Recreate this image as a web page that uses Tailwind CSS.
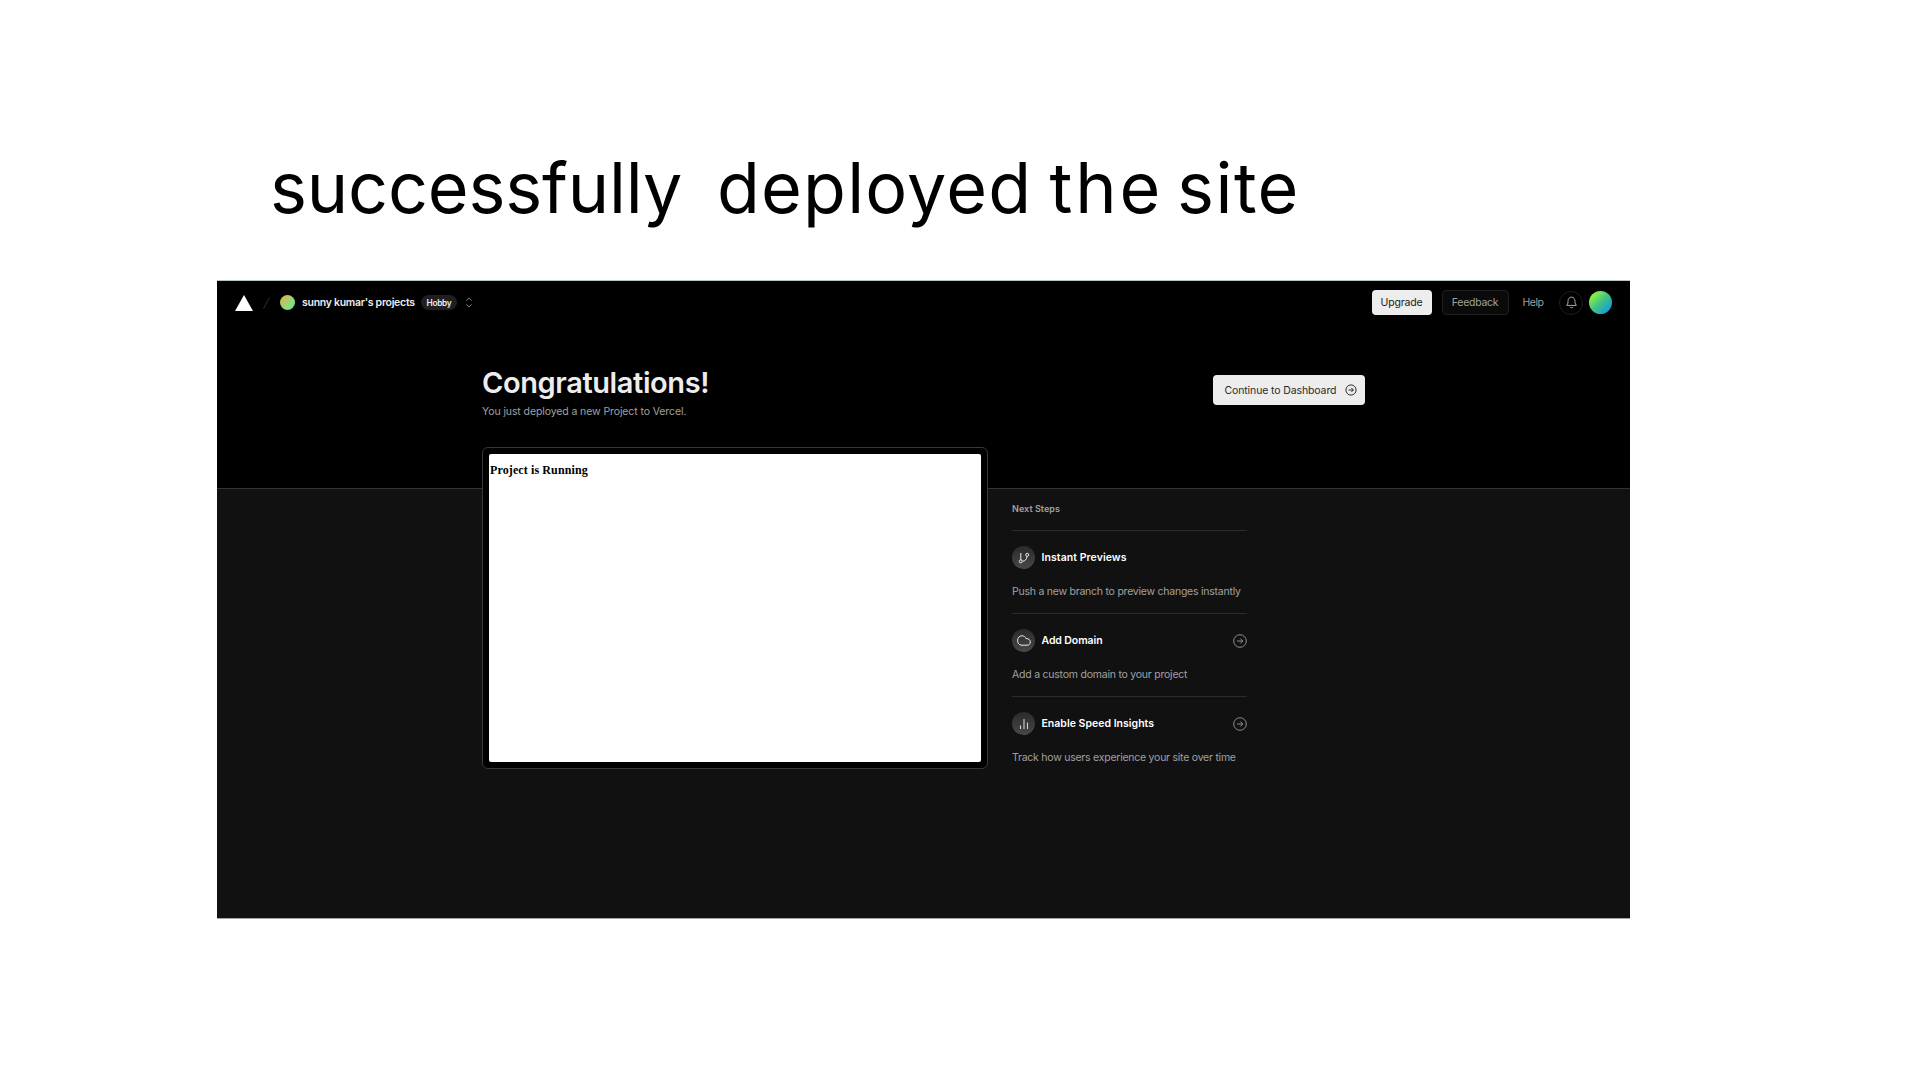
<!DOCTYPE html>
<html lang="en">
<head>
<meta charset="utf-8">
<title>Successfully deployed the site</title>
<script src="https://cdn.jsdelivr.net/npm/@tailwindcss/browser@4"></script>
</head>
<body class="h-[1080px] w-[1920px] overflow-hidden bg-white font-['Inter',sans-serif]">
<h1 class="flex h-[280px] pt-[147px] pl-[270px] text-[70px] leading-[81px] whitespace-nowrap text-black">
  <span class="w-[447px] tracking-[-0.15px]">successfully</span>
  <span class="w-[332.5px] tracking-[1.2px]">deployed</span>
  <span class="w-[127.5px] tracking-[2.8px]">the</span>
  <span class="tracking-[1.5px]">site</span>
</h1>

<main class="ml-[217px] flex h-[639px] w-[1413px] flex-col border-t border-b border-t-[#b9c6bd] border-b-[#a5a2a2] bg-[#111] text-[10.5px] leading-4 text-[#a1a1a1]">
  <div class="h-[208px] shrink-0 border-b border-[#333] bg-black">
    <header class="flex h-[43px] items-center pr-[18px] pl-[18px]">
      <svg class="h-4 w-[18px] shrink-0" viewBox="0 0 18 16"><path d="M9 0l9 16H0z" fill="#fff"/></svg>
      <svg class="ml-2.5 h-3 w-[7px] shrink-0" viewBox="0 0 7 12"><path d="M6.5.5l-6 11" stroke="#2e2e2e" fill="none"/></svg>
      <span class="ml-2.5 size-[15px] shrink-0 rounded-full bg-linear-135 from-[#dcae3a] to-[#1ef0a0]"></span>
      <span class="ml-[7px] w-[119px] pt-px font-semibold tracking-[-0.28px] whitespace-nowrap text-[#ededed]">sunny kumar's projects</span>
      <span class="flex h-[15px] w-9 shrink-0 items-center justify-center rounded-full bg-[#1f1f1f] text-[8.3px] font-semibold tracking-[-0.3px] text-[#ededed]">Hobby</span>
      <svg class="ml-2 h-[11px] w-2 shrink-0" viewBox="0 0 8 11" fill="none" stroke="#8f8f8f" stroke-width=".9"><path d="M1.2 3.7L4 .9l2.8 2.8M1.2 7.3L4 10.1l2.8-2.8"/></svg>
      <div class="ml-auto flex items-center">
        <button class="h-[25px] w-[60px] rounded-[4px] bg-[#ededed] pt-px pr-px tracking-[-0.18px] text-[#1a1a1a]">Upgrade</button>
        <button class="ml-2.5 h-[25px] w-[67px] rounded-[4px] border border-[#1f1f1f] bg-[#0a0a0a] pt-px pr-px tracking-[-0.28px]">Feedback</button>
        <span class="ml-[13.5px] w-[36.5px] pt-px tracking-[-0.45px]">Help</span>
        <span class="flex size-6 items-center justify-center rounded-full border border-[#1f1f1f]">
          <svg class="size-[13px]" viewBox="0 0 13 13" fill="none" stroke="#a8a8a8" stroke-width="1"><path d="M3 5.2C3 2.8 4.300 1.100 6.500 1.100S10 2.800 10 5.200V7l1.300 2.400H1.700L3 7zM4.800 11c.9 1 2.500 1 3.400 0"/></svg>
        </span>
        <span class="ml-1.5 size-[23px] rounded-full bg-linear-135 from-[#8af52e] from-15% via-[#42c281] to-[#1996e0] to-90%"></span>
      </div>
    </header>
    <div class="ml-[265px] flex w-[883px] justify-between">
      <div class="pt-[41px]">
        <h2 class="text-[29px] leading-9 font-semibold tracking-[-0.4px] text-[#ededed]">Congratulations!</h2>
        <p class="mt-[3px] tracking-[-0.1px]">You just deployed a new Project to Vercel.</p>
      </div>
      <button class="mt-[51px] flex h-[30px] w-[152px] items-center rounded-[4px] bg-[#ededed] pl-[11.5px] tracking-[-0.12px] whitespace-nowrap text-[#2a2a2a]">
        <span class="w-[120px] pt-px text-left">Continue to Dashboard</span>
        <svg class="size-3 shrink-0" viewBox="0 0 12 12" fill="none" stroke="#222" stroke-width=".95"><circle cx="6" cy="6" r="5.1"/><path d="M3.5 6h4.8M6.3 3.9L8.4 6 6.3 8.1"/></svg>
      </button>
    </div>
  </div>

  <div class="flex pl-[265px]">
    <div class="z-10 mt-[-42px] h-[322px] w-[506px] shrink-0 rounded-[6px] border border-[#383838] bg-black p-1.5">
      <div class="h-full rounded-[2px] bg-white pt-2 pl-px font-['Liberation_Serif',serif] text-[12px] font-bold tracking-[0.112px] text-black">Project is Running</div>
    </div>
    <section class="ml-6 w-[235px] whitespace-nowrap">
      <h3 class="mt-3 h-[29px] text-[9px] leading-4 font-semibold tracking-[0.05px]">Next Steps</h3>
      <div class="h-[83px] border-t border-[#2c2c2c] pt-[15px]">
        <div class="flex items-center">
          <span class="flex size-[23px] items-center justify-center rounded-full bg-linear-to-b from-[#2b2b2b] to-[#484848]">
            <svg class="size-3" viewBox="0 0 12 12" fill="none" stroke="#ededed" stroke-width="1"><path d="M2.8 1v7M4.3 9.3c2.7-.2 4.5-1.8 4.7-5"/><circle cx="2.8" cy="9.4" r="1.5"/><circle cx="9.2" cy="2.8" r="1.5"/></svg>
          </span>
          <span class="ml-[6.5px] font-semibold tracking-[0.07px] text-white">Instant Previews</span>
        </div>
        <p class="mt-[14.5px] tracking-[-0.237px]">Push a new branch to preview changes instantly</p>
      </div>
      <div class="h-[83px] border-t border-[#2c2c2c] pt-[15px]">
        <div class="flex items-center">
          <span class="flex size-[23px] items-center justify-center rounded-full bg-linear-to-b from-[#2b2b2b] to-[#484848]">
            <svg class="h-[11px] w-3.5" viewBox="0 0 14 11" fill="none" stroke="#ededed" stroke-width="1"><path d="M4 10.2C1.9 9.6.6 8 .6 5.6.6 2.7 2.5.8 5 .8c2 0 3.3 1 4 2.8 2.6-.1 4.3 1.3 4.3 3.4 0 1.9-1.3 3.2-3.3 3.2z"/></svg>
          </span>
          <span class="ml-[6.5px] font-semibold tracking-[-0.09px] text-white">Add Domain</span>
          <svg class="ml-auto size-3.5" viewBox="0 0 14 14" fill="none" stroke="#8f8f8f" stroke-width="1"><circle cx="7" cy="7" r="6.3"/><path d="M4 7h5.6M7.3 4.5L9.8 7 7.3 9.5"/></svg>
        </div>
        <p class="mt-[14.5px] tracking-[-0.228px]">Add a custom domain to your project</p>
      </div>
      <div class="h-[83px] border-t border-[#2c2c2c] pt-[15px]">
        <div class="flex items-center">
          <span class="flex size-[23px] items-center justify-center rounded-full bg-linear-to-b from-[#2b2b2b] to-[#484848]">
            <svg class="size-3" viewBox="0 0 12 12" fill="none" stroke="#d0d0d0" stroke-width="1.1"><path d="M2.5 11V7.5M6 11V1M9.5 11V4.5"/></svg>
          </span>
          <span class="ml-[6.5px] font-semibold tracking-[0.015px] text-white">Enable Speed Insights</span>
          <svg class="ml-auto size-3.5" viewBox="0 0 14 14" fill="none" stroke="#8f8f8f" stroke-width="1"><circle cx="7" cy="7" r="6.3"/><path d="M4 7h5.6M7.3 4.5L9.8 7 7.3 9.5"/></svg>
        </div>
        <p class="mt-[14.5px] tracking-[-0.242px]">Track how users experience your site over time</p>
      </div>
    </section>
  </div>
</main>
</body>
</html>
